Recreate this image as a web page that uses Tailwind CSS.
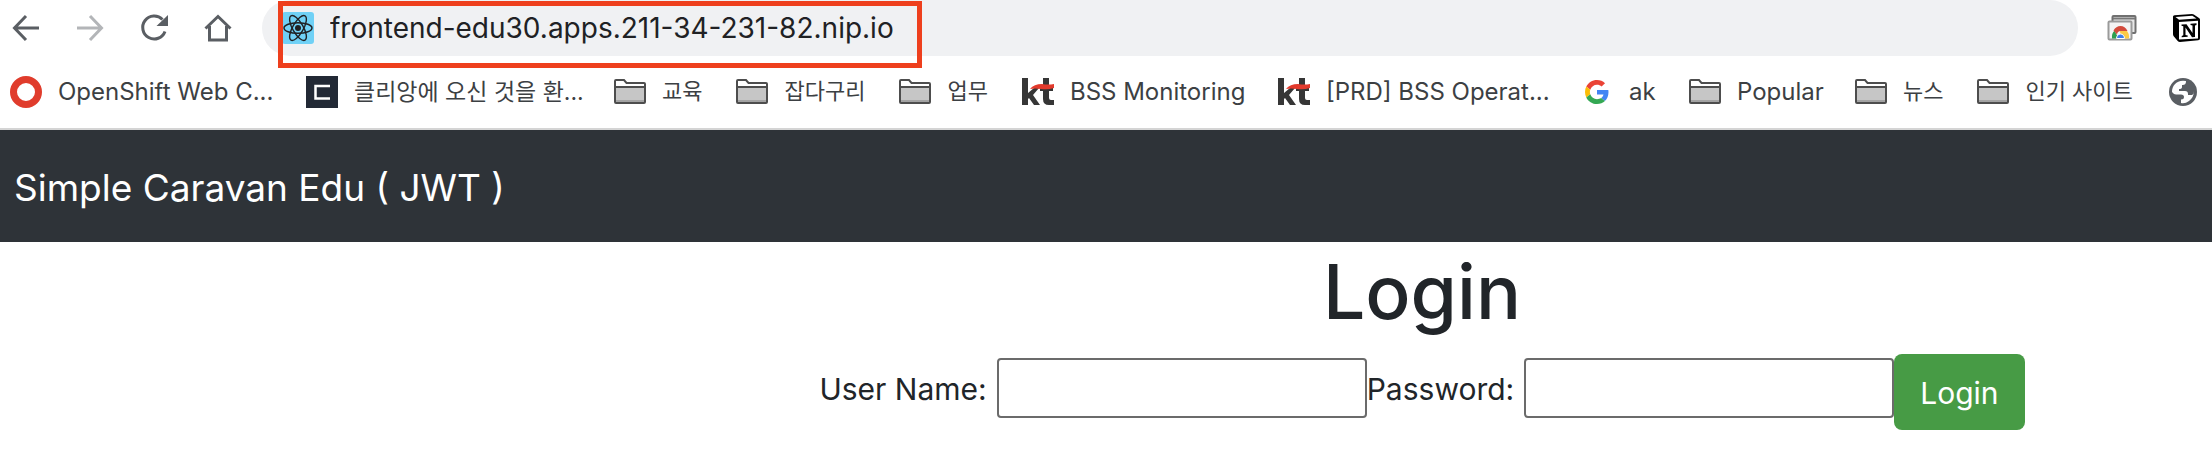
<!DOCTYPE html>
<html lang="ko">
<head>
<meta charset="utf-8">
<meta name="viewport" content="width=device-width, initial-scale=1">
<title>Simple Caravan Edu</title>
<script src="https://cdn.jsdelivr.net/npm/@tailwindcss/browser@4"></script>
</head>
<body class="overflow-x-hidden bg-white font-['Inter','Noto_Sans_CJK_KR',sans-serif] text-[#212529]">
<svg class="hidden" aria-hidden="true">
  <symbol id="folder" viewBox="0 0 32 32">
    <path d="M1 27V4.500q0-.500.500-.500h8.500l2.500 3H30.500q.500 0 .500.500V27q0 .500-.500.500H1.500Q1 27.500 1 27z" fill="#fff"/>
    <path d="M2 12h28v12H2z" fill="#c6c6c6"/><path d="M2 24h28v2.500H2z" fill="#a3a3a3"/>
    <path d="M1 26V5q0-1 1-1h8l2.500 3H30q1 0 1 1v18q0 1-1 1H2q-1 0-1-1zM1 11h30" fill="none" stroke="#4d4d4d" stroke-width="2"/>
  </symbol>
  <symbol id="kt" viewBox="0 0 32 32">
    <path d="M0 2h6v15l6-5h5l-6 7 7 10h-6l-5-7-1 1v6H0z" fill="#363636"/>
    <path d="M21 2h6v8h4v5h-4v7q0 2 2 2h3v5h-5q-6 0-6-6v-8h-3v-4h3z" fill="#363636"/>
    <path d="M8 13q4-5 12-5 6 1 12 0v4q-6 2-13 1-6-1-11 0z" fill="#e23a2c"/>
  </symbol>
</svg>

<header class="border-b-2 border-[#d4d4d4]">
  <div class="flex h-14 items-center">
    <nav class="flex shrink-0 items-center gap-8 pl-2.5 text-[#5a5e63]" aria-label="Browser">
      <button aria-label="Back" class="size-8"><svg viewBox="0 0 32 32" fill="none" stroke="currentColor" stroke-width="3"><path d="M29 16H5M16 4L4.500 16 16 28"/></svg></button>
      <button aria-label="Forward" class="size-8 text-[#b3b5b8]"><svg viewBox="0 0 32 32" fill="none" stroke="currentColor" stroke-width="3"><path d="M3 16h24M16 4l11.500 12L16 28"/></svg></button>
      <button aria-label="Reload" class="size-8"><svg viewBox="0 0 32 32"><path d="M27 19.500A11.500 11.500 0 1 1 24.500 7.500" fill="none" stroke="currentColor" stroke-width="3"/><path d="M30 3v11H18.500z" fill="currentColor"/></svg></button>
      <button aria-label="Home" class="size-8"><svg viewBox="0 0 32 32" fill="none" stroke="currentColor" stroke-width="3"><path d="M3.500 16.500L16 4.500l12.500 12M7.500 14v14h17V14"/></svg></button>
    </nav>
    <div class="relative ml-7 flex h-14 flex-1 items-center rounded-full bg-[#f0f1f3] pl-5">
      <svg class="size-8 shrink-0" viewBox="0 0 32 32"><rect width="32" height="32" rx="3" fill="#70d1f6"/><g fill="none" stroke="#202124" stroke-width="1.400"><ellipse cx="16" cy="16" rx="14" ry="5.300"/><ellipse cx="16" cy="16" rx="14" ry="5.300" transform="rotate(60 16 16)"/><ellipse cx="16" cy="16" rx="14" ry="5.300" transform="rotate(120 16 16)"/></g><circle cx="16" cy="16" r="3" fill="#202124"/></svg>
      <input aria-label="Address" class="ml-4 min-w-0 flex-1 bg-transparent text-[28px] leading-10 text-[#202124] outline-none" value="frontend-edu30.apps.211-34-231-82.nip.io">
      <div class="pointer-events-none absolute top-px left-4 h-[67px] w-[644px] border-5 border-[#ee3f1d]"></div>
    </div>
    <div class="flex shrink-0 items-center gap-8 pr-2.5 pl-7">
      <button aria-label="Cast" class="size-8"><svg viewBox="0 0 32 32"><rect x="6.500" y="4" width="23" height="17" rx="1" fill="#e8e8e8" stroke="#707070" stroke-width="2"/><path d="M7 6.500h22" stroke="#777" stroke-width="2"/><rect x="2.500" y="9.500" width="23" height="18" rx="1" fill="#f4f4f4" stroke="#9a9a9a" stroke-width="2"/><path d="M6 26.500a8 9 0 0 1 2.500-8l4 8z" fill="#2f9e4f"/><path d="M14 19h7a8 9 0 0 1 2 7.500h-8z" fill="#fdca45"/><path d="M7.500 18.500q2.500-4.500 7-4.500t7 5h-7q-3 0-3.500 3.500z" fill="#d34b3c"/><path d="M10.500 26.500a4 4.500 0 0 1 8 0z" fill="#3f7de8" stroke="#fff"/></svg></button>
      <button aria-label="Notion" class="size-8"><svg viewBox="0 0 32 32"><path d="M3 4.500q0-1 1.500-1.200L22 2q1 0 1.800.500L29 6q1 .500 1 1.500v19q0 1.700-1.800 1.800L10 30q-1.500 0-2.300-1L3.500 24q-.500-.800-.500-2z" fill="#000"/><path d="M5.500 5L22.300 3.800 26.500 6.500 9 7.700z" fill="#fff"/><path d="M9 10l19-1.300v17.700L9 27.600z" fill="#fff"/><path d="M11.500 12.500l5-.3 6 8.800v-7.500l-2-.5v-1.300l6-.4V13l-1.500.5v11.500l-3 .2-6.500-9.700v7.500l2.200.5v1.300l-6 .4v-1.300l1.600-.7V14.200l-1.800-.4z" fill="#000"/></svg></button>
    </div>
  </div>

  <nav aria-label="Bookmarks" class="flex h-[72px] items-center gap-[34px] overflow-hidden pl-2.5 text-2xl whitespace-nowrap text-[#3c4043] [&_a]:flex [&_a]:shrink-0 [&_a]:items-center [&_a]:gap-4 [&_svg]:size-8 [&_svg]:shrink-0">
    <a href="#"><svg viewBox="0 0 32 32"><circle cx="16" cy="16" r="12.500" fill="none" stroke="#e03c2c" stroke-width="7"/></svg><span class="w-[214px]">OpenShift Web C...</span></a>
    <a href="#"><svg viewBox="0 0 32 32"><path d="M0 0h32v32H0z" fill="#222935"/><path d="M24 10H9.500v12.500H24" fill="none" stroke="#fff" stroke-width="2.500"/></svg><span class="w-[226px] text-[23px]">클리앙에 오신 것을 환...</span></a>
    <a href="#"><svg><use href="#folder"/></svg><span class="text-[22px]">교육</span></a>
    <a href="#"><svg><use href="#folder"/></svg><span class="text-[22px]">잡다구리</span></a>
    <a href="#"><svg><use href="#folder"/></svg><span class="text-[22px]">업무</span></a>
    <a href="#"><svg><use href="#kt"/></svg><span class="w-[174px]">BSS Monitoring</span></a>
    <a href="#"><svg><use href="#kt"/></svg><span class="w-[221px]">[PRD] BSS Operat...</span></a>
    <a href="#"><svg viewBox="-8 -8 64 64"><path fill="#EA4335" d="M24 9.500c3.540 0 6.710 1.220 9.210 3.600l6.850-6.850C35.900 2.380 30.470 0 24 0 14.620 0 6.510 5.380 2.560 13.220l7.980 6.190C12.430 13.720 17.740 9.500 24 9.500z"/><path fill="#4285F4" d="M46.980 24.550c0-1.570-.15-3.090-.38-4.550H24v9.020h12.940c-.58 2.960-2.260 5.480-4.780 7.180l7.730 6c4.510-4.180 7.090-10.360 7.090-17.650z"/><path fill="#FBBC05" d="M10.530 28.590c-.48-1.450-.76-2.990-.76-4.590s.27-3.140.76-4.590l-7.980-6.190C.92 16.460 0 20.120 0 24c0 3.880.92 7.540 2.560 10.780l7.970-6.190z"/><path fill="#34A853" d="M24 48c6.480 0 11.930-2.130 15.890-5.810l-7.730-6c-2.150 1.450-4.920 2.300-8.160 2.300-6.260 0-11.570-4.220-13.470-9.910l-7.980 6.190C6.510 42.620 14.620 48 24 48z"/></svg><span class="w-[26px]">ak</span></a>
    <a href="#"><svg><use href="#folder"/></svg><span class="w-[84px]">Popular</span></a>
    <a href="#"><svg><use href="#folder"/></svg><span class="text-[22px]">뉴스</span></a>
    <a href="#"><svg><use href="#folder"/></svg><span class="text-[22px]">인기 사이트</span></a>
    <a href="#" aria-label="Website"><svg viewBox="0 0 32 32"><circle cx="16" cy="16" r="14" fill="#5a5e63"/><path d="M5 16C5 10 9 5 16 4.800L19 5c0 3-1 4-4 4v2q0 2-3 2v2h6q3 0 3 3v1h4q2-1 1.900-4Q27 21 22 25q-4 3-8 2v-3.500q3 0 3-2.500t-3-2.500H9q-2 0-4-2.500z" fill="#fff"/></svg></a>
  </nav>
</header>

<div class="flex h-28 items-center bg-[#2e3338] px-3.5"><a href="#" class="pt-0.5 text-[37px] leading-none text-white">Simple Caravan Edu ( JWT )</a></div>

<main class="flex flex-col items-center pl-[632px]">
  <h1 class="mt-0.5 text-[75px] leading-[96px] font-medium">Login</h1>
  <form class="mt-3.5 flex items-start text-[30px] leading-[62px]" onsubmit="return false">
    <label for="user" class="mt-1 pr-2.5">User Name:</label>
    <input id="user" type="text" class="mt-1 h-[60px] w-[370px] rounded-sm border-2 border-[#6b6b6b] px-1">
    <label for="pass" class="mt-1 pr-2.5">Password:</label>
    <input id="pass" type="password" class="mt-1 h-[60px] w-[370px] rounded-sm border-2 border-[#6b6b6b] px-1">
    <button class="h-[76px] rounded-lg bg-[#479b45] px-[26px] pt-0.5 text-white">Login</button>
  </form>
</main>
</body>
</html>
